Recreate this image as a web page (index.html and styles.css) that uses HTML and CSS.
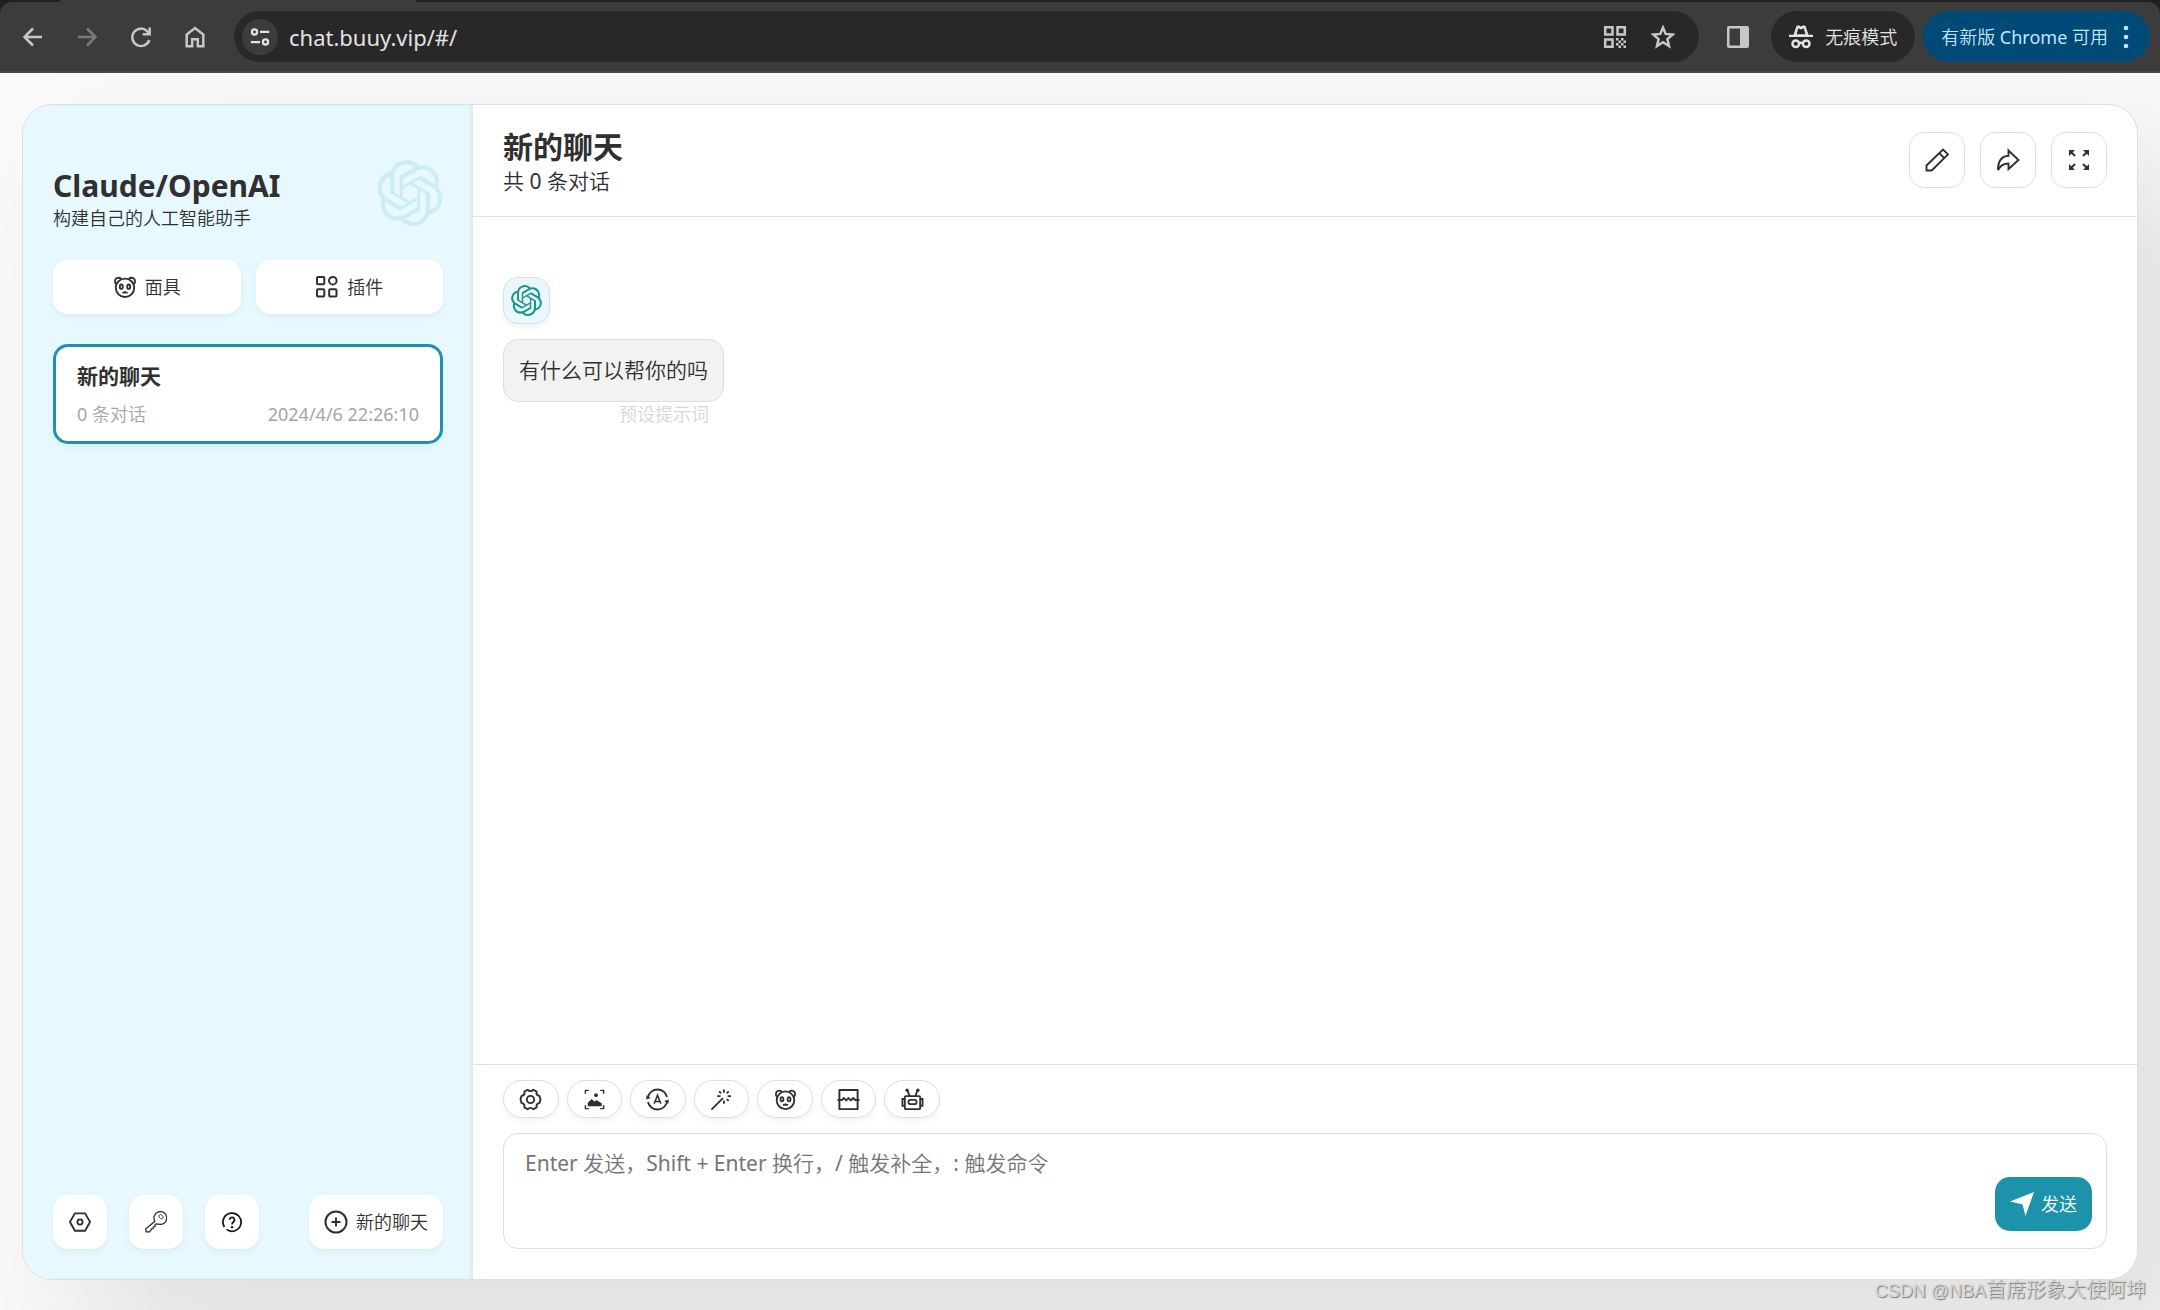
FILE: index.html
```html
<!DOCTYPE html>
<html lang="zh-CN">
<head>
<meta charset="utf-8">
<title>Claude/OpenAI</title>
<link rel="stylesheet" href="styles.css">
</head>
<body>
<svg class="defs" aria-hidden="true">
  <symbol id="openai" viewBox="0 0 24 24"><path fill="currentColor" d="M22.2819 9.8211a5.9847 5.9847 0 0 0-.5157-4.9108 6.0462 6.0462 0 0 0-6.5098-2.9A6.0651 6.0651 0 0 0 4.9807 4.1818a5.9847 5.9847 0 0 0-3.9977 2.9 6.0462 6.0462 0 0 0 .7427 7.0966 5.98 5.98 0 0 0 .511 4.9107 6.051 6.051 0 0 0 6.5146 2.9001A5.9847 5.9847 0 0 0 13.2599 24a6.0557 6.0557 0 0 0 5.7718-4.2058 5.9894 5.9894 0 0 0 3.9977-2.9001 6.0557 6.0557 0 0 0-.7475-7.0729zm-9.022 12.6081a4.4755 4.4755 0 0 1-2.8764-1.0408l.1419-.0804 4.7783-2.7582a.7948.7948 0 0 0 .3927-.6813v-6.7369l2.02 1.1686a.071.071 0 0 1 .038.052v5.5826a4.504 4.504 0 0 1-4.4945 4.4944zm-9.6607-4.1254a4.4708 4.4708 0 0 1-.5346-3.0137l.142.0852 4.783 2.7582a.7712.7712 0 0 0 .7806 0l5.8428-3.3685v2.3324a.0804.0804 0 0 1-.0332.0615L9.74 19.9502a4.4992 4.4992 0 0 1-6.1408-1.6464zM2.3408 7.8956a4.485 4.485 0 0 1 2.3655-1.9728V11.6a.7664.7664 0 0 0 .3879.6765l5.8144 3.3543-2.0201 1.1685a.0757.0757 0 0 1-.071 0l-4.8303-2.7865A4.504 4.504 0 0 1 2.3408 7.872zm16.5963 3.8558L13.1038 8.364 15.1192 7.2a.0757.0757 0 0 1 .071 0l4.8303 2.7913a4.4944 4.4944 0 0 1-.6765 8.1042v-5.6772a.79.79 0 0 0-.407-.667zm2.0107-3.0231l-.142-.0852-4.7735-2.7818a.7759.7759 0 0 0-.7854 0L9.409 9.2297V6.8974a.0662.0662 0 0 1 .0284-.0615l4.8303-2.7866a4.4992 4.4992 0 0 1 6.6802 4.66zM8.3065 12.863l-2.02-1.1638a.0804.0804 0 0 1-.038-.0567V6.0742a4.4992 4.4992 0 0 1 7.3757-3.4537l-.142.0805L8.704 5.459a.7948.7948 0 0 0-.3927.6813zm1.0976-2.3654l2.602-1.4998 2.6069 1.4998v2.9994l-2.5974 1.4997-2.6067-1.4997Z"/></symbol>
  <symbol id="panda" viewBox="0 0 24 24"><g fill="none" stroke="currentColor" stroke-width="1.900"><path d="M3.200 9C1.800 7.800 1.600 5.400 2.700 4 4 2.400 6.600 2.300 8.200 3.900M20.800 9C22.200 7.800 22.400 5.400 21.300 4 20 2.400 17.400 2.300 15.800 3.900"/><circle cx="12" cy="12.800" r="9.200"/><ellipse cx="8.300" cy="11.700" rx="1.500" ry="2.200"/><ellipse cx="15.700" cy="11.700" rx="1.500" ry="2.200"/><path d="M9.300 17.600h1.900l.8-.8.8.8h1.900" stroke-width="1.600"/></g></symbol>
</svg>

<header class="browser">
  <div class="tabs"></div>
  <div class="toolbar">
    <nav class="nav">
      <button class="tool" aria-label="后退"><svg viewBox="0 0 24 24"><path d="M21 12H4M12 3.500 3.500 12l8.500 8.500" class="line"/></svg></button>
      <button class="tool dim" aria-label="前进"><svg viewBox="0 0 24 24"><path d="M3 12h17M12 3.500l8.500 8.500-8.500 8.500" class="line"/></svg></button>
      <button class="tool" aria-label="刷新"><svg viewBox="0 0 24 24"><path d="M20.300 15a8.700 8.700 0 1 1-2-8.700L21 9M20.700 2.500V9.300h-7" class="line"/></svg></button>
      <button class="tool" aria-label="主页"><svg viewBox="0 0 24 24"><path d="M3.700 21.300V9.500L12 3l8.300 6.500v11.800h-5.500v-7H9.200v7z" class="line"/></svg></button>
    </nav>
    <div class="omnibox">
      <button class="site" aria-label="网站信息"><svg viewBox="0 0 24 24"><g class="line"><circle cx="6" cy="6.500" r="2.800"/><path d="M12 6.500H22M2 17.500h10"/><circle cx="18" cy="17.500" r="2.800"/></g></svg></button>
      <input class="url" type="text" aria-label="地址" value="chat.buuy.vip/#/">
      <button class="tool" aria-label="二维码"><svg viewBox="0 0 24 24"><path d="M2.200 2.200h7.300v7.300H2.200zM14.500 2.200h7.300v7.300h-7.300zM2.200 14.500h7.300v7.300H2.200z" class="line"/><path fill="currentColor" d="M13 13h2.500v2.500H13zM18 13h2.500v2.500H18zM15.500 15.500H18V18h-2.500zM20.500 15.500H23V18h-2.500zM13 18h2.500v2.500H13zM18 18h2.500v2.500H18zM15.500 20.500H18V23h-2.500zM20.500 20.500H23V23h-2.500z"/></svg></button>
      <button class="tool" aria-label="收藏"><svg viewBox="0 0 24 24"><path d="M12 2.600l2.700 6.300 7 .6-5.300 4.600 1.600 6.900-6-3.700-6 3.700 1.600-6.900-5.300-4.600 7-.6z" class="line"/></svg></button>
    </div>
    <button class="tool panel" aria-label="侧边栏"><svg viewBox="0 0 24 24"><path fill="currentColor" fill-rule="evenodd" d="M3 1h18a2 2 0 0 1 2 2v18a2 2 0 0 1-2 2H3a2 2 0 0 1-2-2V3a2 2 0 0 1 2-2zm.500 2.500v17H14v-17z"/></svg></button>
    <button class="pill"><svg viewBox="0 0 24 24"><path fill="currentColor" d="M0 9.800h24V12H0zM4.500 9.800 7.500 1l2-.8L12 1.500 14.500.2l2 .8 3 8.800z"/><path d="M7.600 9.200 9.200 3.300l2.800 1.200 2.800-1.200 1.600 5.900z" fill="#282828"/><g class="line"><circle cx="6.800" cy="18.700" r="3.300"/><circle cx="17.200" cy="18.700" r="3.300"/><path d="M10 18.300q2-1.300 4 0"/></g></svg>无痕模式</button>
    <button class="pill update">有新版 Chrome 可用<svg viewBox="0 0 8 24"><g fill="currentColor"><circle cx="4" cy="3" r="2.300"/><circle cx="4" cy="12" r="2.300"/><circle cx="4" cy="21" r="2.300"/></g></svg></button>
  </div>
</header>

<main class="page">
  <div class="window">
    <aside class="sidebar">
      <div class="brand">
        <div>
          <h1>Claude/OpenAI</h1>
          <p>构建自己的人工智能助手</p>
        </div>
        <svg class="logo"><use href="#openai"/></svg>
      </div>
      <div class="shortcuts">
        <button class="btn"><svg><use href="#panda"/></svg>面具</button>
        <button class="btn"><svg viewBox="0 0 24 24"><g fill="none" stroke="currentColor" stroke-width="2"><rect x="2" y="2" width="7.300" height="7.300" rx="1"/><circle cx="17.800" cy="5.700" r="3.800"/><rect x="2" y="14.300" width="7.300" height="7.300" rx="1"/><rect x="14.200" y="14.300" width="7.300" height="7.300" rx="1"/></g></svg>插件</button>
      </div>
      <a class="chat" href="#/">
        <strong>新的聊天</strong>
        <span class="meta"><span>0 条对话</span><time>2024/4/6 22:26:10</time></span>
      </a>
      <div class="tail">
        <button class="btn square" aria-label="设置"><svg viewBox="0 0 24 24"><g fill="none" stroke="currentColor" stroke-width="2"><path d="M6.500 2.500h11L23 12l-5.500 9.500h-11L1 12z"/><circle cx="12" cy="12" r="2.800"/></g></svg></button>
        <button class="btn square" aria-label="密钥"><svg viewBox="0 0 24 24"><g fill="none" stroke="currentColor" stroke-width="1.400"><path d="M10.800 11.300A7 7 0 1 1 15 14.400l-3-.3-1.300 1.300.2 1.800-1.800.1-.3 2-1.900.1-.3 1.600-1.700 1.800H1.200l-.5-3.200z"/><rect x="15" y="4.500" width="5" height="3.400" rx="1.500" transform="rotate(45 17.500 6.200)" stroke-width="1"/></g></svg></button>
        <button class="btn square dark" aria-label="帮助"><svg viewBox="0 0 24 24"><g fill="none" stroke="currentColor" stroke-width="1.900"><path d="M3.700 17.500a9.900 9.900 0 1 1 2.300 2.500"/><path d="M9.300 9.600a2.700 2.700 0 1 1 4.400 2.100C12.500 12.600 12 13 12 14.600"/></g><circle cx="12" cy="17.600" r="1.300" fill="currentColor"/></svg></button>
        <button class="btn new"><svg viewBox="0 0 24 24"><g fill="none" stroke="currentColor" stroke-width="2"><circle cx="12" cy="12" r="10.500"/><path d="M12 7.500v9M7.500 12h9"/></g></svg>新的聊天</button>
      </div>
    </aside>

    <section class="main">
      <header class="head">
        <div>
          <h2>新的聊天</h2>
          <p>共 0 条对话</p>
        </div>
        <div class="actions">
          <button aria-label="重命名"><svg viewBox="0 0 24 24"><g fill="none" stroke="currentColor" stroke-width="1.900"><path d="M1.500 22.500v-5L18 1.500 23 6.300 6.700 22.500zM14.300 5.200l4.800 4.800"/></g></svg></button>
          <button aria-label="分享"><svg viewBox="0 0 24 24"><path fill="none" stroke="currentColor" stroke-width="1.900" d="M12.500 2.500 22.500 12 12.500 21v-5.500C7.500 15.300 4.500 17.300 2 22 2 13.500 5 8.300 12.500 7.800z"/></svg></button>
          <button aria-label="全屏"><svg viewBox="0 0 24 24"><path fill="currentColor" d="M2 2h6L2 8zM22 2v6l-6-6zM2 22v-6l6 6zM22 22h-6l6-6z"/><path fill="none" stroke="currentColor" stroke-width="2" d="M4 4l4 4M20 4l-4 4M4 20l4-4M20 20l-4-4"/></svg></button>
        </div>
      </header>
      <div class="messages">
        <div class="avatar"><svg><use href="#openai"/></svg></div>
        <div class="message">
          <p class="bubble">有什么可以帮你的吗</p>
          <small>预设提示词</small>
        </div>
      </div>
      <form class="composer">
        <div class="options">
          <button type="button" aria-label="对话设置"><svg viewBox="0 0 24 24"><g fill="none" stroke="currentColor" stroke-width="2"><path d="M9 1.800Q12 4.800 15 1.800L18.400 3.800Q17.500 7.500 21.500 8.500L22.400 12 21.500 15.500Q17.500 16.500 18.400 20.200L15 22.200Q12 19.200 9 22.200L5.600 20.200Q6.500 16.500 2.500 15.500L1.600 12 2.500 8.500Q6.500 7.500 5.600 3.800z" stroke-linejoin="round"/><circle cx="12" cy="12" r="3.800"/></g></svg></button>
          <button type="button" aria-label="图片"><svg viewBox="0 0 24 24"><path fill="none" stroke="currentColor" stroke-width="1.500" d="M2.500 6V2.500H6M18 2.500h3.500V6M21.500 18v3.500H18M6 21.500H2.500V18"/><circle cx="13.500" cy="7.500" r="2" fill="currentColor"/><path fill="currentColor" d="M5 19v-3.500L9 11.500l3 2.500 2-1.500L19.500 16v3z"/></svg></button>
          <button type="button" aria-label="主题"><svg viewBox="0 0 24 24"><g fill="none" stroke="currentColor" stroke-width="1.900"><path d="M2 9.500A10.300 10.300 0 0 1 22 9.300M22 14.500A10.300 10.300 0 0 1 2 14.700"/><path d="M8.500 16.500 12 7.500l3.500 9M9.800 14h4.400" stroke-width="1.600"/></g><path fill="currentColor" d="M.5 7.500 5 10.500.3 12zM23.500 16.500 19 13.500l4.700-1.500z"/></svg></button>
          <button type="button" aria-label="快捷指令"><svg viewBox="0 0 24 24"><path fill="none" stroke="currentColor" stroke-width="1.900" d="M1.500 22.500 13.500 10.500M14.500 1.500v3.500M14.500 13v3.500M7.500 8.500H11M18.500 8.500H22M9.500 3.500l2 2M19.500 3.500l-2 2M19.500 13.500l-2-2"/></svg></button>
          <button type="button" aria-label="面具"><svg><use href="#panda"/></svg></button>
          <button type="button" aria-label="清除聊天"><svg viewBox="0 0 24 24"><path fill="none" stroke="currentColor" stroke-width="2" stroke-linejoin="round" d="M2.500 2h19v20h-19zM.5 12.500h4.500l2.200-2 2.400 2.500 2.400-2.500 2.400 2.500 2.400-2.500 2.200 2h4.500"/></svg></button>
          <button type="button" aria-label="模型"><svg viewBox="0 0 24 24"><g fill="none" stroke="currentColor" stroke-width="1.900"><rect x="4" y="8.500" width="16" height="13.500" rx="1"/><rect x="7.800" y="12.300" width="8.400" height="4.500" rx="2"/><path d="M4 11.500H1.500v7H4M20 11.500h2.500v7H20M9 8.500 6.500 2M15 8.500 17.500 2"/></g><circle cx="6.300" cy="2.300" r="1.700" fill="currentColor"/><circle cx="17.700" cy="2.300" r="1.700" fill="currentColor"/></svg></button>
        </div>
        <div class="field">
          <textarea aria-label="消息" placeholder="Enter 发送，Shift + Enter 换行，/ 触发补全，: 触发命令"></textarea>
          <button class="send" type="button"><svg viewBox="0 0 24 24"><path fill="currentColor" d="M24 0 15.500 24 12.500 12.500 0 9.500z"/></svg>发送</button>
        </div>
      </form>
    </section>
  </div>
  <div class="watermark"><span>CSDN @NBA</span>首席形象大使阿坤</div>
</main>
</body>
</html>
```
FILE: styles.css
```css
* { box-sizing: border-box; }
body {
  margin: 0;
  min-height: 100vh;
  display: flex;
  flex-direction: column;
  background: #fafafa;
  color: #303030;
  font: 400 18px/24px "Noto Sans", "Noto Sans CJK SC DemiLight", "Noto Sans CJK SC", sans-serif;
}
h1, h2, p { margin: 0; }
h1, h2, strong { font-family: "Noto Sans", "Noto Sans CJK SC", sans-serif; }
button { font: inherit; color: inherit; border: 0; background: none; padding: 0; cursor: pointer; }
svg { width: 24px; height: 24px; display: block; flex: none; }
.defs { position: absolute; width: 0; height: 0; }
.line { fill: none; stroke: currentColor; stroke-width: 2.5; }

/* browser chrome */
.browser { background: #202020; color: #c7c7c7; }
.tabs { height: 2px; width: 356px; margin-left: 60px; background: #3c3c3c; }
.toolbar {
  height: 71px;
  padding: 0 10px 0 21px;
  display: flex;
  align-items: center;
  background: #3c3c3c;
  border-bottom: 2px solid #4a4a4a;
  border-radius: 12px 12px 0 0;
}
.nav { display: flex; gap: 30px; margin-right: 27px; }
.dim { color: #7a7a7a; }
.omnibox {
  flex: 1;
  height: 51px;
  display: flex;
  align-items: center;
  gap: 24px;
  padding: 0 24px 0 8px;
  border-radius: 26px;
  background: #282828;
}
.site {
  width: 36px;
  height: 36px;
  display: grid;
  place-items: center;
  border-radius: 50%;
  background: #3c3c3c;
  color: #e3e3e3;
}
.site svg { width: 22px; height: 22px; }
.url {
  flex: 1;
  min-width: 0;
  margin-left: -13px;
  padding: 0;
  border: 0;
  background: none;
  color: #e3e3e3;
  font: 400 22px/28px "Noto Sans", sans-serif;
}
.panel { margin: 0 21px 0 27px; }
.pill {
  height: 51px;
  display: flex;
  align-items: center;
  gap: 12px;
  padding: 0 18px;
  border-radius: 26px;
  background: #282828;
  color: #e3e3e3;
}
.update { gap: 14px; margin-left: 8px; padding: 0 20px 0 18px; background: #004a77; color: #c2e7ff; }
.update svg { width: 8px; height: 24px; }

/* page */
.page {
  flex: 1;
  display: flex;
  position: relative;
  overflow: hidden;
  padding: 31px 22px 30px;
}
.window {
  flex: 1;
  display: flex;
  border: 1px solid #dedede;
  border-radius: 30px;
  overflow: hidden;
  background: #fff;
  box-shadow: 75px 75px 150px 15px rgba(0, 0, 0, .1);
}
.sidebar {
  width: 450px;
  display: flex;
  flex-direction: column;
  padding: 30px;
  background: #e7f8ff;
  box-shadow: inset -3px 0 3px rgba(0, 0, 0, .05);
}
.brand { display: flex; justify-content: space-between; padding: 25px 0 30px; }
.brand > div { padding-top: 6px; }
.brand h1 { font-size: 30px; line-height: 40px; font-weight: 700; }
.logo { width: 66px; height: 66px; color: #cdecf6; }
.shortcuts { display: flex; gap: 15px; margin-bottom: 30px; }
.shortcuts .btn { flex: 1; }
.btn {
  height: 54px;
  display: flex;
  align-items: center;
  justify-content: center;
  gap: 8px;
  border-radius: 15px;
  background: #fff;
  box-shadow: 0 3px 6px rgba(0, 0, 0, .05);
}
.chat {
  display: block;
  padding: 14px 21px 15px;
  border: 3px solid #1d93ab;
  border-radius: 15px;
  background: #fff;
  box-shadow: 0 3px 6px rgba(0, 0, 0, .05);
  color: inherit;
  text-decoration: none;
}
.chat strong { display: block; font-size: 21px; line-height: 30px; font-weight: 700; }
.meta { display: flex; justify-content: space-between; margin-top: 11px; color: #a6a6a6; }
.tail { display: flex; gap: 22px; margin-top: auto; }
.square { width: 54px; }
.square svg { width: 22px; height: 22px; }
.dark { color: #14141f; }
.new { margin-left: auto; padding: 0 15px; }

.main { flex: 1; min-width: 0; display: flex; flex-direction: column; }
.head {
  display: flex;
  justify-content: space-between;
  padding: 21px 30px;
  border-bottom: 1px solid #e2e2e2;
}
.head h2 { font-size: 30px; line-height: 42px; font-weight: 700; }
.head p { font-size: 21px; line-height: 27px; }
.actions { display: flex; gap: 15px; padding-top: 6px; }
.actions button {
  width: 56px;
  height: 56px;
  display: grid;
  place-items: center;
  border: 1px solid #dedede;
  border-radius: 15px;
}
.messages {
  flex: 1;
  display: flex;
  flex-direction: column;
  align-items: flex-start;
  gap: 15px;
  padding: 60px 30px 30px;
}
.avatar {
  width: 47px;
  height: 47px;
  display: grid;
  place-items: center;
  border: 1px solid #dedede;
  border-radius: 15px;
  background: #e7f8ff;
  box-shadow: 0 3px 6px rgba(0, 0, 0, .05);
  color: #1f948c;
}
.avatar svg { width: 31px; height: 31px; }
.bubble {
  padding: 15px;
  border: 1px solid #dedede;
  border-radius: 15px;
  background: #f2f2f2;
  font-size: 21px;
  line-height: 31px;
}
.message small { display: block; padding-right: 15px; font-size: 18px; text-align: right; color: #d6d6d6; }
.composer { padding: 15px 30px 30px; border-top: 1px solid #dedede; }
.options { display: grid; grid-template-columns: repeat(7, 1fr); gap: 8px; width: 437px; margin-bottom: 15px; }
.options button {
  height: 38px;
  display: grid;
  place-items: center;
  border: 1px solid #dedede;
  border-radius: 19px;
  box-shadow: 0 3px 6px rgba(0, 0, 0, .05);
}
.options svg { width: 23px; height: 23px; }
.field { position: relative; display: flex; }
.field textarea {
  flex: 1;
  height: 116px;
  padding: 14px 140px 14px 21px;
  border: 1px solid #dedede;
  border-radius: 15px;
  resize: none;
  color: inherit;
  font: inherit;
  font-size: 21px;
  line-height: 30px;
}
.field textarea::placeholder { color: #757575; }
.send {
  position: absolute;
  right: 15px;
  bottom: 18px;
  height: 54px;
  display: flex;
  align-items: center;
  gap: 7px;
  padding: 0 15px;
  border-radius: 15px;
  background: #1d93ab;
  color: #fff;
}
.watermark {
  position: absolute;
  right: 14px;
  bottom: 6px;
  color: #d5d5d5;
  font: 400 20px/26px "Liberation Sans", "Noto Sans CJK SC DemiLight", "Noto Sans CJK SC", sans-serif;
  text-shadow: 1px 1px 1px #777;
}
.watermark span { font-size: 18px; }
```
